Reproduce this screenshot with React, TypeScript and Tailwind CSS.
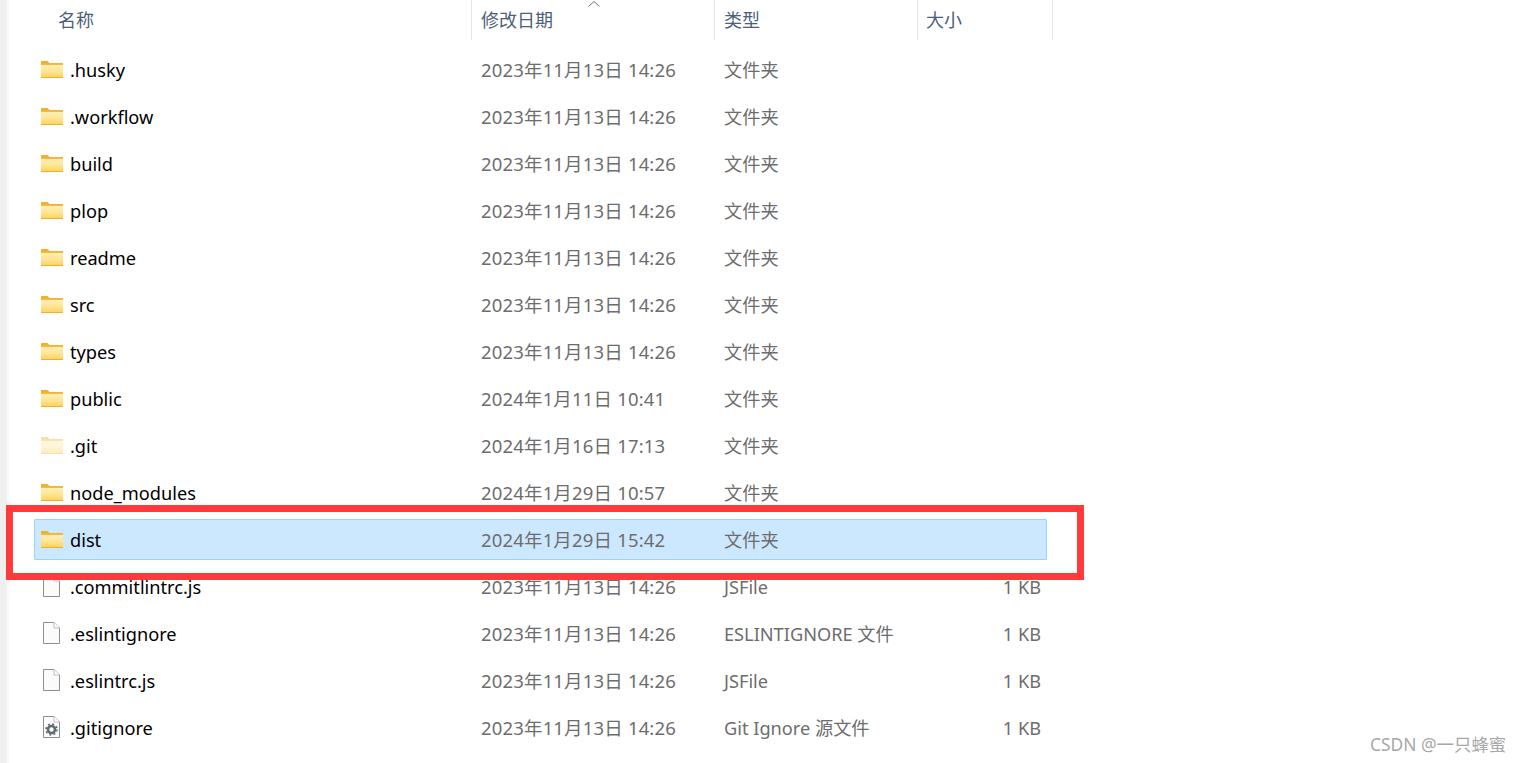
const fontStack = { fontFamily: '"Noto Sans", "Noto Sans CJK SC", sans-serif' }

type Row = { name: string; date: string; type: string; size?: string; icon: 'folder' | 'faded' | 'file' | 'config' }

const rows: Row[] = [
  { name: '.husky', date: '2023年11月13日 14:26', type: '文件夹', icon: 'folder' },
  { name: '.workflow', date: '2023年11月13日 14:26', type: '文件夹', icon: 'folder' },
  { name: 'build', date: '2023年11月13日 14:26', type: '文件夹', icon: 'folder' },
  { name: 'plop', date: '2023年11月13日 14:26', type: '文件夹', icon: 'folder' },
  { name: 'readme', date: '2023年11月13日 14:26', type: '文件夹', icon: 'folder' },
  { name: 'src', date: '2023年11月13日 14:26', type: '文件夹', icon: 'folder' },
  { name: 'types', date: '2023年11月13日 14:26', type: '文件夹', icon: 'folder' },
  { name: 'public', date: '2024年1月11日 10:41', type: '文件夹', icon: 'folder' },
  { name: '.git', date: '2024年1月16日 17:13', type: '文件夹', icon: 'faded' },
  { name: 'node_modules', date: '2024年1月29日 10:57', type: '文件夹', icon: 'folder' },
  { name: 'dist', date: '2024年1月29日 15:42', type: '文件夹', icon: 'folder' },
  { name: '.commitlintrc.js', date: '2023年11月13日 14:26', type: 'JSFile', size: '1 KB', icon: 'file' },
  { name: '.eslintignore', date: '2023年11月13日 14:26', type: 'ESLINTIGNORE 文件', size: '1 KB', icon: 'file' },
  { name: '.eslintrc.js', date: '2023年11月13日 14:26', type: 'JSFile', size: '1 KB', icon: 'file' },
  { name: '.gitignore', date: '2023年11月13日 14:26', type: 'Git Ignore 源文件', size: '1 KB', icon: 'config' },
]

function FolderIcon({ faded }: { faded?: boolean }) {
  return (
    <svg width="22" height="17" viewBox="0 0 22 17" className={faded ? 'opacity-40' : ''}>
      <defs>
        <linearGradient id="folderBody" x1="0" y1="0" x2="0" y2="1">
          <stop offset="0" stopColor="#ffeeb4" />
          <stop offset="0.55" stopColor="#ffe493" />
          <stop offset="1" stopColor="#ffd35e" />
        </linearGradient>
      </defs>
      <path d="M0 1c0-.6.4-1 1-1h5.500L8.500 2H21.500a.5.5 0 0 1 .5.5V5H0z" fill="#efb02a" />
      <rect x="0" y="2.500" width="22" height="14.500" fill="#f3ba3d" />
      <rect x="0" y="4" width="22" height="12" fill="url(#folderBody)" />
      <rect x="0" y="16" width="22" height="1" fill="#eeb02b" />
    </svg>
  )
}

function FileIcon({ config }: { config?: boolean }) {
  return (
    <svg width="17" height="22" viewBox="0 0 17 22">
      <path d="M.5.5h10.500l5.500 5.500v15.500H.5z" fill="#fbfbfb" stroke="#8e8e8e" />
      <path d="M11 .5V6h5.500" fill="#fff" stroke="#bdbdbd" />
      {config && (
        <g>
          <circle cx="8.500" cy="13.500" r="3.500" fill="none" stroke="#5f6b73" strokeWidth="2.600" />
          <circle cx="8.500" cy="13.500" r="5.500" fill="none" stroke="#5f6b73" strokeWidth="1.600" strokeDasharray="2 2.320" />
        </g>
      )}
    </svg>
  )
}

function RowIcon({ icon }: { icon: Row['icon'] }) {
  if (icon === 'folder') return <FolderIcon />
  if (icon === 'faded') return <FolderIcon faded />
  return (
    <span className="pl-[2px]">
      <FileIcon config={icon === 'config'} />
    </span>
  )
}

export default function App() {
  return (
    <div className="relative flex h-[763px] w-[1522px] overflow-hidden bg-white" style={fontStack}>
      <div className="w-[7px] shrink-0 bg-[#f0f0f0]" />
      <div className="w-[3px] shrink-0 bg-[#fafafa]" />

      <div className="flex-1">
        {/* Header */}
        <div className="flex h-10 text-[18px] text-[#4c607a]">
          <div className="flex w-[461px] items-center pl-[48px]">名称</div>
          <div className="relative flex w-[243px] items-center border-l border-[#e5e5e5] pl-[9px]">
            修改日期
            <svg className="absolute left-[115px] top-0" width="14" height="7" viewBox="0 0 14 7">
              <path d="M1.500 6.500 7 1.500l5.500 5" fill="none" stroke="#6d6d6d" />
            </svg>
          </div>
          <div className="flex w-[203px] items-center border-l border-[#e5e5e5] pl-[9px]">类型</div>
          <div className="flex w-[136px] items-center border-x border-[#e5e5e5] pl-[8px]">大小</div>
        </div>

        {/* Rows */}
        <div className="ml-6 flex w-[1013px] flex-col gap-[6px] pt-[9px]">
          {rows.map((row) => (
            <div
              key={row.name}
              className={`flex h-[41px] items-center border ${
                row.name === 'dist' ? 'rounded-[1px] border-[#99d1ff] bg-[#cce8ff]' : 'border-transparent'
              }`}
            >
              <div className="flex w-[437px] items-center pl-[6px] text-[18.2px]">
                <span className="flex w-[29px] shrink-0 items-center">
                  <RowIcon icon={row.icon} />
                </span>
                <span className="pt-[2px] text-black">{row.name}</span>
              </div>
              <div className="w-[243px] pl-[9px] text-[18.5px] tracking-[0.16px] text-[#6d6d6d]">{row.date}</div>
              <div className="w-[230px] pl-[9px] pt-[2px] text-[18.2px] text-[#6d6d6d]">{row.type}</div>
              <div className="flex-1 pr-[5px] pt-[2px] text-right text-[18.2px] text-[#6d6d6d]">{row.size}</div>
            </div>
          ))}
        </div>
      </div>

      {/* Red highlight box */}
      <div className="absolute left-[6px] top-[505px] h-[75px] w-[1078px] border-[7px] border-[#ff3a3a]" />

      {/* Watermark */}
      <div className="absolute left-[1370px] top-[731px] text-[17.4px] text-[#a8a8a8]">CSDN @一只蜂蜜</div>
    </div>
  )
}
